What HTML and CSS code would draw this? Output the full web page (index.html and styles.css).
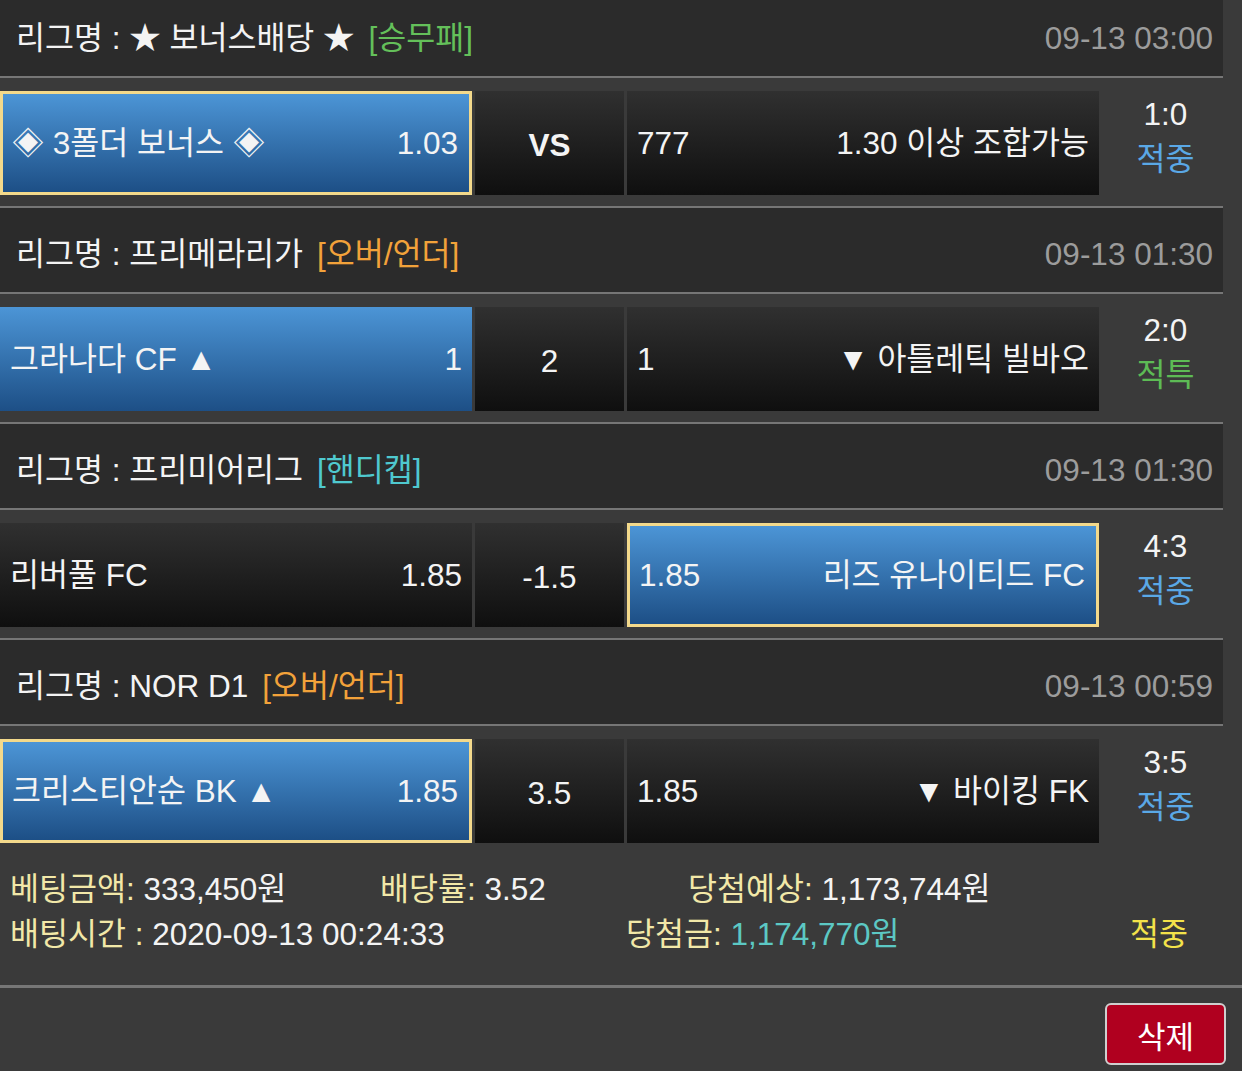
FILE: index.html
```html
<!DOCTYPE html>
<html lang="ko">
<head>
    <meta charset="UTF-8">
    <title>베팅내역</title>
    <link rel="stylesheet" href="styles.css">
</head>
<body>

    <div class="slip">
        <div class="league">
            <span class="name">리그명 : ★ 보너스배당 ★</span>
            <span class="tag green">[승무패]</span>
            <span class="time">09-13 03:00</span>
        </div>
        <div class="bet">
            <div class="pick on picked"><span>◈ 3폴더 보너스 ◈</span><span>1.03</span></div>
            <div class="pick mid vs">VS</div>
            <div class="pick"><span>777</span><span>1.30 이상 조합가능</span></div>
            <div class="result"><div>1:0</div><div class="hit">적중</div></div>
        </div>

        <div class="league">
            <span class="name">리그명 : 프리메라리가</span>
            <span class="tag orange">[오버/언더]</span>
            <span class="time">09-13 01:30</span>
        </div>
        <div class="bet">
            <div class="pick on"><span>그라나다 CF ▲</span><span>1</span></div>
            <div class="pick mid">2</div>
            <div class="pick"><span>1</span><span>▼ 아틀레틱 빌바오</span></div>
            <div class="result"><div>2:0</div><div class="special">적특</div></div>
        </div>

        <div class="league">
            <span class="name">리그명 : 프리미어리그</span>
            <span class="tag cyan">[핸디캡]</span>
            <span class="time">09-13 01:30</span>
        </div>
        <div class="bet">
            <div class="pick"><span>리버풀 FC</span><span>1.85</span></div>
            <div class="pick mid">-1.5</div>
            <div class="pick on picked"><span>1.85</span><span>리즈 유나이티드 FC</span></div>
            <div class="result"><div>4:3</div><div class="hit">적중</div></div>
        </div>

        <div class="league">
            <span class="name">리그명 : NOR D1</span>
            <span class="tag orange">[오버/언더]</span>
            <span class="time">09-13 00:59</span>
        </div>
        <div class="bet last">
            <div class="pick on picked"><span>크리스티안순 BK ▲</span><span>1.85</span></div>
            <div class="pick mid">3.5</div>
            <div class="pick"><span>1.85</span><span>▼ 바이킹 FK</span></div>
            <div class="result"><div>3:5</div><div class="hit">적중</div></div>
        </div>
    </div>

    <div class="summary">
        <div class="line">
            <span class="w1"><b>베팅금액:</b> 333,450원</span>
            <span class="w2"><b>배당률:</b> 3.52</span>
            <span><b>당첨예상:</b> 1,173,744원</span>
        </div>
        <div class="line">
            <span class="w3"><b>배팅시간 :</b> 2020-09-13 00:24:33</span>
            <span class="w4"><b>당첨금:</b> <em>1,174,770원</em></span>
            <span class="state">적중</span>
        </div>
    </div>

    <div class="actions">
        <button class="del-btn">삭제</button>
    </div>

</body>
</html>
```

FILE: styles.css
```css
body {
    margin: 0;
    padding: 0;
    font-family: "Liberation Sans", "Noto Sans CJK KR", sans-serif;
    font-size: 31.5px;
    line-height: 40px;
    color: #f4f4f4;
    background: #3a3a3a;
    overflow: hidden;
}
.slip {
    width: 1223px;
    margin-top: -8px;
}
.league {
    display: flex;
    align-items: center;
    height: 76px;
    padding: 8px 10px 0 16px;
    background: #2b2b2b;
    border-bottom: 2px solid #767676;
}
.league .tag {
    margin-left: 14px;
}
.green {
    color: #64c05a;
}
.orange {
    color: #f2a23a;
}
.cyan {
    color: #4fc9cf;
}
.league .time {
    margin-left: auto;
    color: #9c9c9c;
}
.bet {
    display: grid;
    grid-template-columns: 472px 149px 472px 1fr;
    column-gap: 3px;
    height: 104px;
    padding: 13px 0 11px;
    border-bottom: 2px solid #767676;
}
.bet.last {
    border-bottom: none;
}
.pick {
    display: flex;
    align-items: center;
    justify-content: space-between;
    padding: 0 10px;
    background: linear-gradient(#303030, #0f0f0f);
    box-sizing: border-box;
}
.pick.mid {
    justify-content: center;
    padding-top: 4px;
}
.pick.vs {
    font-weight: bold;
}
.pick.on {
    background: linear-gradient(#4c95d6, #1d4f86);
}
.pick.picked {
    border: 3px solid #f3d98b;
    padding: 0 11px 0 9px;
}
.result {
    display: flex;
    flex-direction: column;
    justify-content: center;
    align-items: center;
    line-height: 45px;
    padding-left: 6px;
    padding-bottom: 12px;
}
.hit {
    color: #5aa8e6;
}
.special {
    color: #5dbb55;
}
.summary {
    padding: 13px 0 28px 10px;
    line-height: 45px;
    border-bottom: 3px solid #767676;
}
.summary .line {
    display: flex;
}
.summary b {
    font-weight: normal;
    color: #f2e8a8;
}
.summary em {
    font-style: normal;
    color: #5cc8c4;
}
.w1 {
    width: 370px;
}
.w2 {
    width: 308px;
}
.w3 {
    width: 616px;
}
.w4 {
    width: 504px;
}
.state {
    color: #f3e24a;
}
.actions {
    display: flex;
    justify-content: flex-end;
    padding: 15px 16px 0 0;
}
.del-btn {
    width: 121px;
    height: 62px;
    font-family: "Liberation Sans", "Noto Sans CJK KR", sans-serif;
    font-size: 31px;
    color: #fff;
    background: #b0001f;
    border: 2px solid #cfcfcf;
    border-radius: 6px;
}
```
